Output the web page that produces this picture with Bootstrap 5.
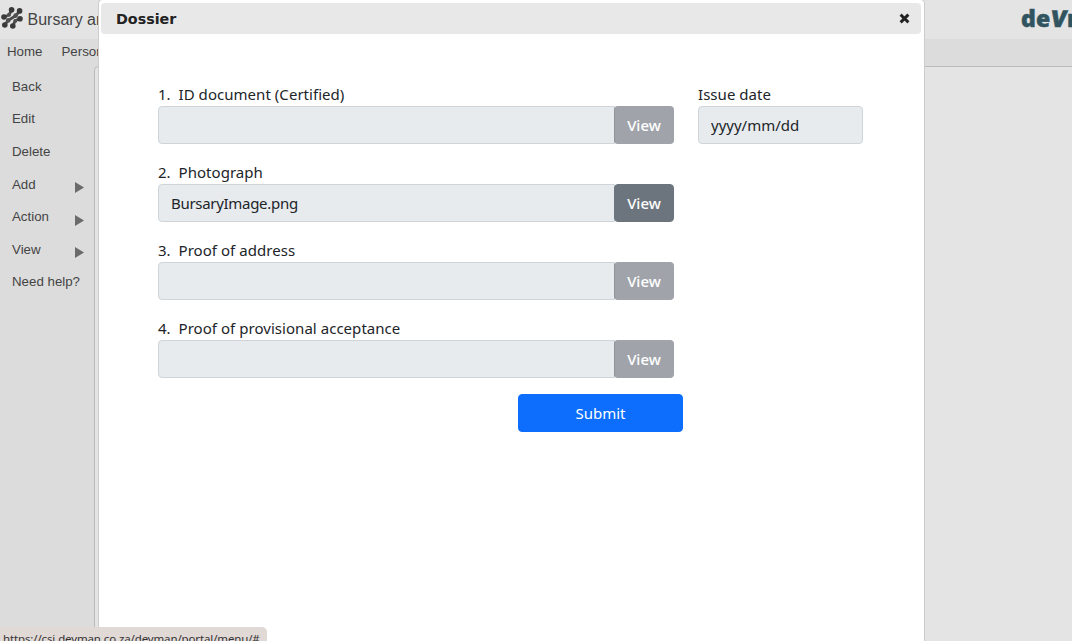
<!DOCTYPE html>
<html lang="en">
<head>
<meta charset="utf-8">
<meta name="viewport" content="width=device-width, initial-scale=1">
<title>Dossier</title>
<link href="https://cdn.jsdelivr.net/npm/bootstrap@5.3.0/dist/css/bootstrap.min.css" rel="stylesheet">
<style>
html,body{height:100%}
body{background:#dcdcdc;color:#444;font-family:"Liberation Sans",Arial,sans-serif;font-size:13.3px;overflow:hidden}
.topbar{height:39px;background:#e4e4e4}
.app-title{font-size:16px;line-height:39px;margin-left:3.5px}
.brand{width:51px;height:39px;color:#305460;font:800 23px/36px "Open Sans",sans-serif;letter-spacing:.3px;white-space:nowrap;-webkit-text-stroke:.5px #305460}
.brand-v{display:inline-block;transform:skewX(-8deg)}
.menubar{height:27px;line-height:25px;padding-left:7px;gap:19px}
.side{width:94px;padding-top:4.6px}
.side a{height:32.55px;padding:0 10px 0 12px;line-height:32px;color:#444}
.side svg{margin-top:6px}
.panel{border:solid #bcbcbc;border-width:1px 0 0 1px;border-radius:5px 0 0;background:#e4e4e4}
.dialog{left:98px;top:-1px;width:827px;height:660px;padding:3px 3px 3px 2px;background:#fff;border:1px solid #ccc;border-radius:4px;color:#212529;font-family:"Noto Sans","Open Sans",sans-serif;font-size:15px}
.dialog-head{height:31px;padding:0 11px 0 15px;background:#e8e8e8;border-radius:4px;color:#222}
.dialog-head h1{font:bold 14.3px/30px "DejaVu Sans",Verdana,sans-serif}
.form-area{padding:49px 56px 0 57px}
.files{width:516px}
.issue{width:165px}
.dialog label{display:block;height:23px;line-height:22px;white-space:pre;letter-spacing:.04px}
.field{height:55px;margin-bottom:23px}
.dialog .form-control,.dialog .btn{height:38px;font-size:15px;border-radius:4px;padding:6px 12px;line-height:24px}
.dialog .form-control,.dialog .form-control:disabled{background:#e7ebee;border-color:#ced4da;color:#212529}
.dialog .input-group .form-control{border-radius:4px 0 0 4px;letter-spacing:-.3px}
.dialog .form-area .input-group .btn{width:60px;border-radius:4px!important;font-weight:500;padding:6px 0}
.view-off:disabled{background:#a0a4aa;border-color:#a0a4aa;border-left-color:#8d949a;opacity:1}
.submit{width:165px;margin-left:360px;margin-top:-1px}
.status{left:0;bottom:0;width:267px;height:14px;padding-left:3px;background:#e1d9d6;border-radius:0 5px 0 0;color:#333;font:11.5px/23px "Noto Sans",sans-serif;letter-spacing:-.13px;overflow:hidden;white-space:nowrap}
</style>
</head>
<body class="d-flex flex-column">
<header class="topbar d-flex justify-content-between flex-shrink-0 overflow-hidden">
  <div class="d-flex text-nowrap">
    <svg width="24" height="39" viewBox="0 0 24 39" fill="#3a3a3a" stroke="#4c4c4c" stroke-width="2.8" stroke-linecap="round">
      <path d="M4 17 9 15 11.7 10M4.7 25 8 20.5 15.8 15.6 19.5 11.2M12.8 25.8 15.2 20.8 20 18.6" fill="none"/>
      <g stroke="none"><circle cx="11.6" cy="9.8" r="2.8"/><circle cx="19.6" cy="10.9" r="2.8"/><circle cx="4" cy="17" r="2.8"/><circle cx="20" cy="18.7" r="2.8"/><circle cx="4.8" cy="25" r="2.8"/><circle cx="12.8" cy="26" r="2.8"/></g>
      <g stroke="none" fill="#505050"><circle cx="9" cy="14.8" r="2"/><circle cx="15.6" cy="15.6" r="2.3"/><circle cx="8.2" cy="20.4" r="2.3"/><circle cx="15.2" cy="21" r="2"/></g>
    </svg>
    <span class="app-title">Bursary and</span>
  </div>
  <div class="brand overflow-hidden">de<span class="brand-v">V</span>m</div>
</header>
<nav class="menubar d-flex flex-shrink-0"><span>Home</span><span>Personal</span></nav>
<div class="d-flex flex-grow-1">
  <nav class="side d-flex flex-column flex-shrink-0">
    <a class="d-flex text-decoration-none">Back</a>
    <a class="d-flex text-decoration-none">Edit</a>
    <a class="d-flex text-decoration-none">Delete</a>
    <a class="d-flex text-decoration-none justify-content-between align-items-center">Add<svg width="9" height="11"><path d="M0 0 9 5.5 0 11Z" fill="#6b6b6b"/></svg></a>
    <a class="d-flex text-decoration-none justify-content-between align-items-center">Action<svg width="9" height="11"><path d="M0 0 9 5.5 0 11Z" fill="#6b6b6b"/></svg></a>
    <a class="d-flex text-decoration-none justify-content-between align-items-center">View<svg width="9" height="11"><path d="M0 0 9 5.5 0 11Z" fill="#6b6b6b"/></svg></a>
    <a class="d-flex text-decoration-none text-nowrap">Need help?</a>
  </nav>
  <main class="panel flex-grow-1"></main>
</div>
<section class="dialog position-absolute" role="dialog">
  <div class="dialog-head d-flex justify-content-between align-items-center">
    <h1 class="m-0">Dossier</h1>
    <svg width="11" height="11" viewBox="0 0 11 11"><path d="M2.7 2.7 8.3 8.3M8.3 2.7 2.7 8.3" stroke="#222" stroke-width="3" stroke-linecap="square"/></svg>
  </div>
  <div class="form-area d-flex gap-4">
    <form class="files flex-shrink-0">
      <div class="field"><label>1.  ID document (Certified)</label><div class="input-group"><input class="form-control" disabled><button class="btn btn-secondary view-off" disabled>View</button></div></div>
      <div class="field"><label>2.  Photograph</label><div class="input-group"><input class="form-control" value="BursaryImage.png" disabled><button class="btn btn-secondary" type="button">View</button></div></div>
      <div class="field"><label>3.  Proof of address</label><div class="input-group"><input class="form-control" disabled><button class="btn btn-secondary view-off" disabled>View</button></div></div>
      <div class="field"><label>4.  Proof of provisional acceptance</label><div class="input-group"><input class="form-control" disabled><button class="btn btn-secondary view-off" disabled>View</button></div></div>
      <button class="btn btn-primary submit" type="button">Submit</button>
    </form>
    <div class="issue"><label>Issue date</label><input class="form-control" value="yyyy/mm/dd" disabled></div>
  </div>
</section>
<div class="status position-absolute">https://csi.devman.co.za/devman/portal/menu/#</div>
<script src="https://cdn.jsdelivr.net/npm/bootstrap@5.3.0/dist/js/bootstrap.bundle.min.js"></script>
</body>
</html>
